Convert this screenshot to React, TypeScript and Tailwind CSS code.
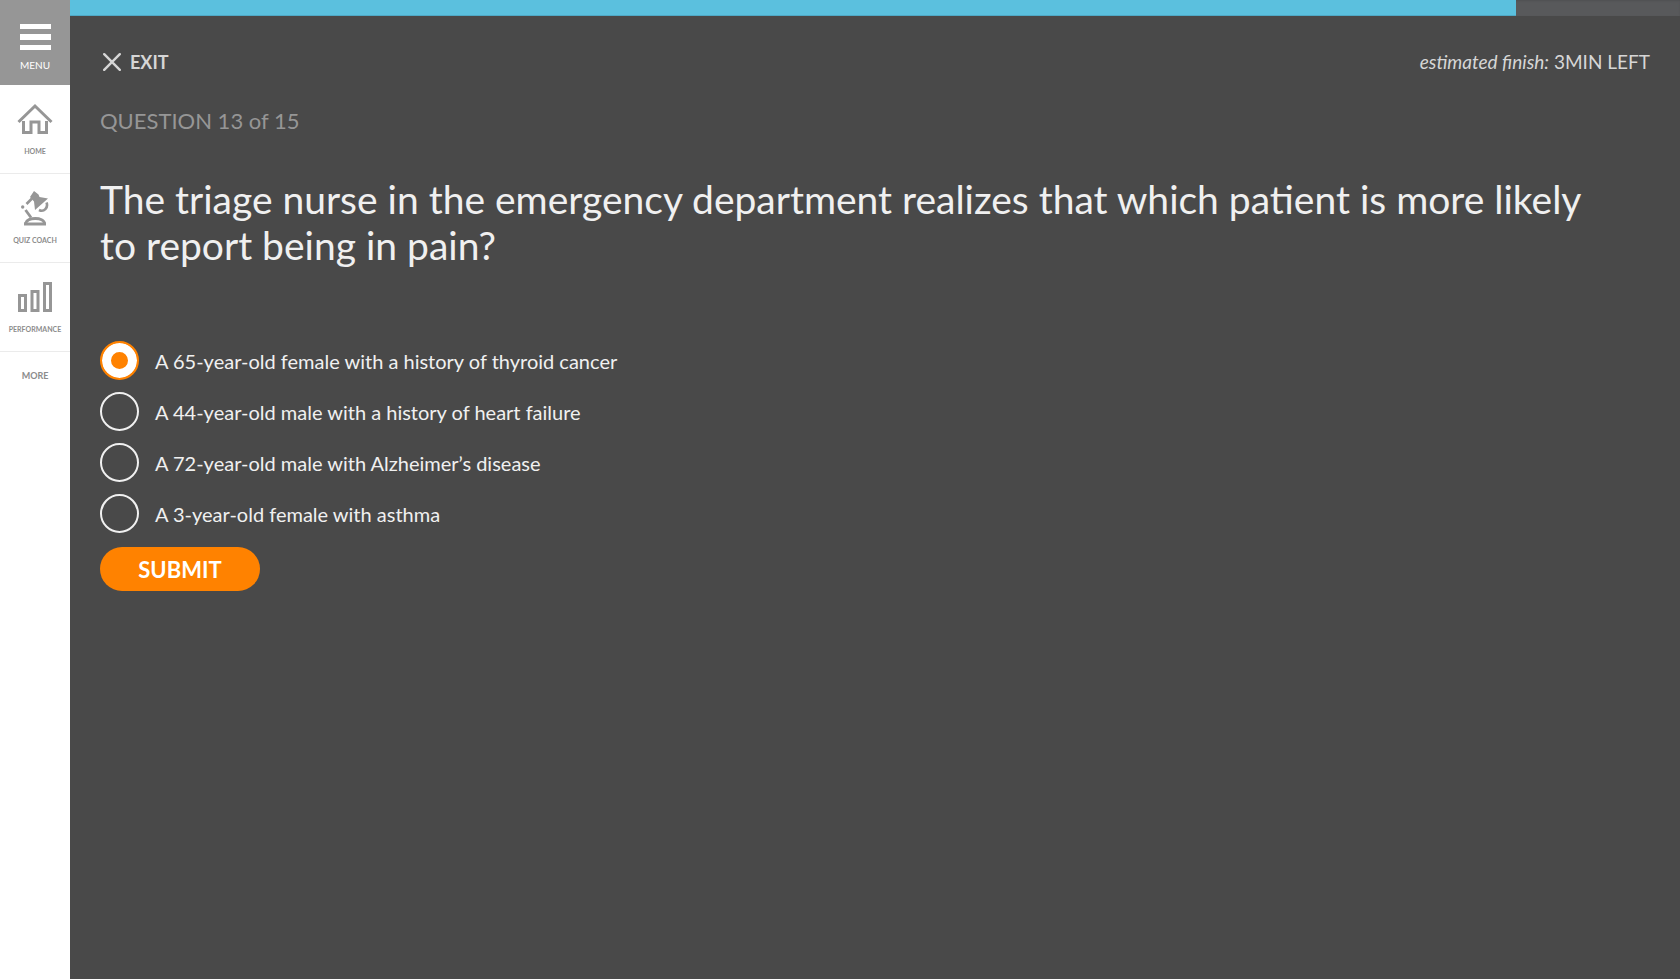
import { useState, type ReactNode } from "react";

const ANSWERS = [
  "A 65-year-old female with a history of thyroid cancer",
  "A 44-year-old male with a history of heart failure",
  "A 72-year-old male with Alzheimer’s disease",
  "A 3-year-old female with asthma",
];

function HomeIcon() {
  return (
    <svg width="36" height="32" viewBox="0 0 36 32" fill="none" stroke="#969696" strokeWidth="3" aria-hidden="true">
      <path d="M1.500 19 18 3l16.500 16" />
      <path d="M6.500 18v11.500h7.500V19h8v10.500h7.500V18" />
    </svg>
  );
}

function LampIcon() {
  return (
    <svg width="28" height="35" viewBox="0 0 28 35" aria-hidden="true">
      <g fill="#969696">
        <path d="m13 0 4.500 3.500 1 2.500L27 7.500 14 19l-1-8.500L9 6z" />
        <circle cx="1.700" cy="16" r="1.700" />
      </g>
      <g fill="none" stroke="#969696">
        <path d="m5.500 13 5.500-5.500" strokeWidth="2.600" />
        <path d="m4.500 19 5.500 7.500" strokeWidth="2.800" />
        <path d="M25.500 11.500c2 5-2.500 10-7.500 7.500" strokeWidth="2.600" />
        <path d="M4.500 32.500C6 25.800 23 25.800 23.500 32.500" strokeWidth="3" />
        <path d="M3 33h22" strokeWidth="3" />
      </g>
    </svg>
  );
}

function BarsIcon() {
  return (
    <svg width="36" height="32" viewBox="0 0 36 32" fill="none" stroke="#969696" strokeWidth="3" aria-hidden="true">
      <path d="M2.500 14.500h6v15h-6zM15 10.500h6v19h-6zM27.500 2.500h6v27h-6z" />
    </svg>
  );
}

function NavItem({ icon, label }: { icon: ReactNode; label: string }) {
  return (
    <a href="#" className="flex h-[89px] flex-col items-center justify-between border-b border-[#ebebeb] pt-4 pb-4 text-[#8c8c8c]">
      <span className="flex h-9 items-center">{icon}</span>
      <span className="text-[7px] leading-3 font-bold whitespace-nowrap">{label}</span>
    </a>
  );
}

export default function App() {
  const [selected, setSelected] = useState(0);
  const progress = 89.8;

  return (
    <div className="flex min-h-screen bg-[#494949] font-['Lato','Open_Sans',sans-serif]">
      <nav className="w-[70px] shrink-0 bg-white">
        <button type="button" className="flex h-[85px] w-full flex-col items-center bg-[#969696] pt-6 text-white">
          <svg width="31" height="26" viewBox="0 0 31 26" fill="currentColor" aria-hidden="true">
            <path d="M0 0h31v5H0zM0 10h31v6H0zM0 21h31v5H0z" />
          </svg>
          <span className="mt-[7px] text-[10px] leading-4">MENU</span>
        </button>
        <NavItem icon={<HomeIcon />} label="HOME" />
        <NavItem icon={<LampIcon />} label="QUIZ COACH" />
        <NavItem icon={<BarsIcon />} label="PERFORMANCE" />
        <button type="button" className="h-12 w-full text-[9px] font-bold text-[#8c8c8c]">
          MORE
        </button>
      </nav>

      <div className="min-w-0 flex-1">
        <div className="h-4 bg-[#58595b] shadow-[inset_0_1px_2px_rgba(0,0,0,0.1)]">
          <div className="h-full border-b border-[#4fa9c6] bg-[#5bc0de]" style={{ width: `${progress}%` }} />
        </div>

        <header className="flex items-center justify-between px-[30px] pt-8 text-[#d6d6d6]">
          <button type="button" className="flex h-7 items-center gap-[9px] pl-[3px] text-[18px] font-bold">
            <svg width="18" height="18" viewBox="0 0 18 18" fill="none" stroke="currentColor" strokeWidth="2.400" strokeLinecap="round" aria-hidden="true">
              <path d="m1.200 1.200 15.600 15.600M16.800 1.200 1.200 16.800" />
            </svg>
            EXIT
          </button>
          <p className="text-[19px] leading-7">
            <em>estimated finish:</em> 3MIN LEFT
          </p>
        </header>

        <main className="px-[30px]">
          <p className="mt-[29px] text-[22px] leading-8 text-[#969696]">QUESTION 13 of 15</p>
          <h1 className="mt-[39px] pr-10 text-[39px] leading-[46px] text-[#f0f0f0]">
            The triage nurse in the emergency department realizes that which patient is more likely to report being in pain?
          </h1>

          <form className="mt-[73px]" onSubmit={(event) => event.preventDefault()}>
            <div className="flex flex-col items-start gap-3">
              {ANSWERS.map((answer, index) => (
                <label key={answer} className="flex items-center gap-4 text-[20px] leading-6 text-[#f0f0f0]">
                  <input
                    type="radio"
                    name="answer"
                    checked={selected === index}
                    onChange={() => setSelected(index)}
                    className="size-[39px] shrink-0 appearance-none rounded-full border-2 border-[#f0f0f0] checked:border-[#ff8200] checked:bg-[#ff8200] checked:shadow-[inset_0_0_0_9px_#ffffff]"
                  />
                  {answer}
                </label>
              ))}
            </div>
            <button type="submit" className="mt-[14px] h-11 w-40 rounded-full bg-[#ff8200] text-[22px] font-bold text-white">
              SUBMIT
            </button>
          </form>
        </main>
      </div>
    </div>
  );
}
